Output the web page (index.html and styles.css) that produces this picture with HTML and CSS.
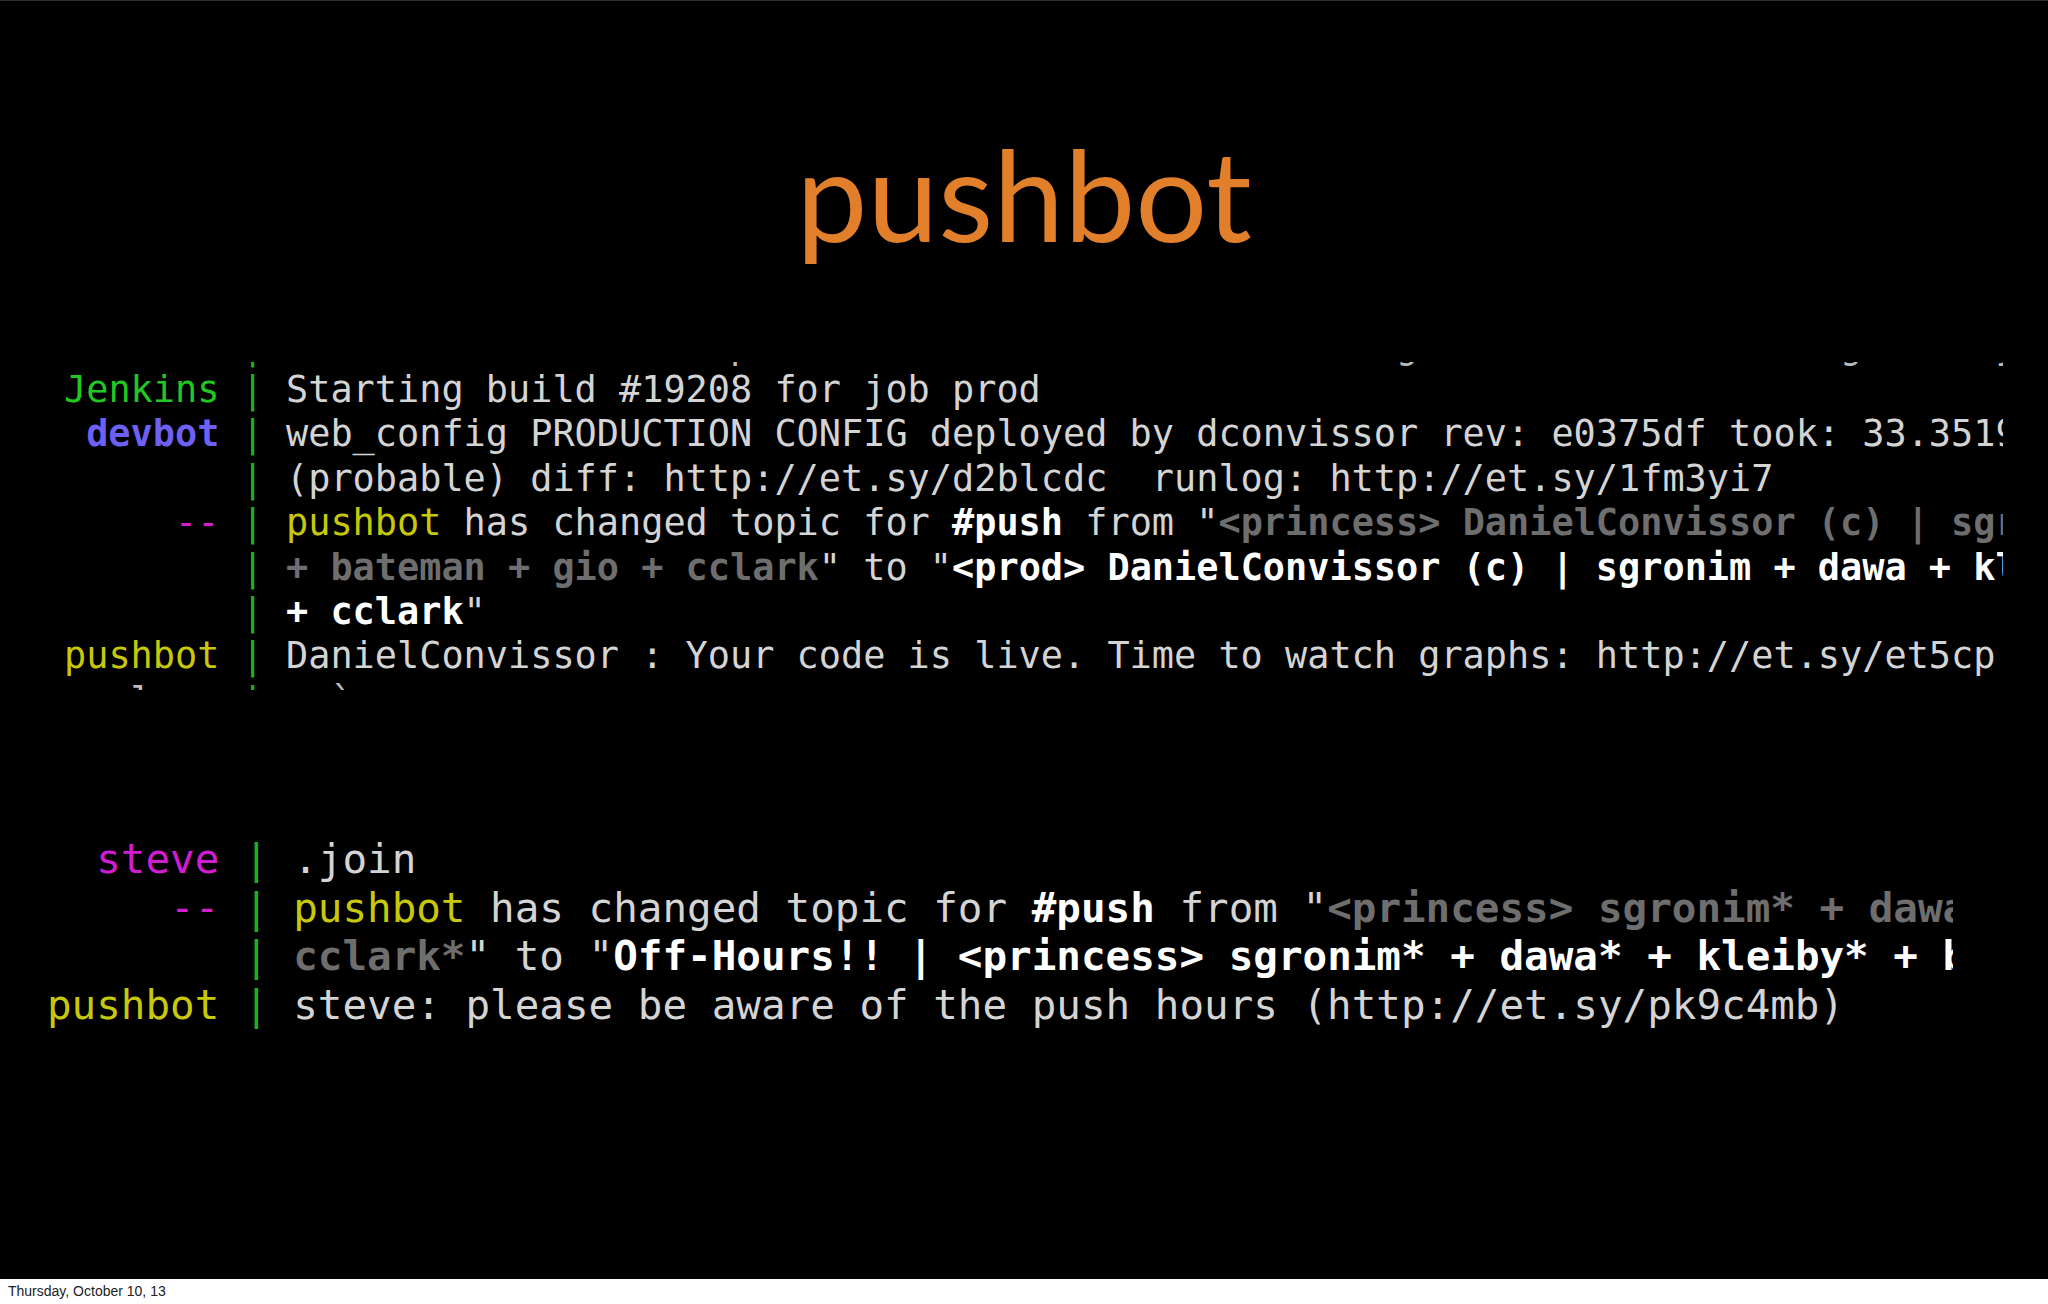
FILE: index.html
```html
<!doctype html>
<html>
    <head>
        <meta charset='utf-8'>
        <title>pushbot</title>
        <link rel="stylesheet" href="styles.css">
    </head>
    <body>
        <div class='slide'>
            <h1 class='title'>pushbot</h1>

            <!-- first irc capture, cropped top and bottom -->
            <div class='term term-a'>
                <div class='rows'>
                    <div class='row ghost'><span class='nick'></span><span class='sep'>|</span><span class='msg'>                    p                             g                   g      y</span></div>
                    <div class='row'><span class='nick c-green'>Jenkins</span><span class='sep'>|</span><span class='msg'>Starting build #19208 for job prod</span></div>
                    <div class='row'><span class='nick c-blue b'>devbot</span><span class='sep'>|</span><span class='msg'>web_config PRODUCTION CONFIG deployed by dconvissor rev: e0375df took: 33.3519s</span></div>
                    <div class='row'><span class='nick'></span><span class='sep'>|</span><span class='msg'>(probable) diff: http://et.sy/d2blcdc  runlog: http://et.sy/1fm3yi7</span></div>
                    <div class='row'><span class='nick c-pink'>--</span><span class='sep'>|</span><span class='msg'><span class='c-yellow'>pushbot</span> has changed topic for <b class='hi'>#push</b> from "<b class='dim'>&lt;princess&gt; DanielConvissor (c) | sgronim + dawa + kleiby</b></span></div>
                    <div class='row'><span class='nick'></span><span class='sep'>|</span><span class='msg'><b class='dim'>+ bateman + gio + cclark</b>" to "<b class='hi'>&lt;prod&gt; DanielConvissor (c) | sgronim + dawa + kleiby</b></span></div>
                    <div class='row'><span class='nick'></span><span class='sep'>|</span><span class='msg'><b class='hi'>+ cclark</b>"</span></div>
                    <div class='row'><span class='nick c-yellow'>pushbot</span><span class='sep'>|</span><span class='msg'>DanielConvissor : Your code is live. Time to watch graphs: http://et.sy/et5cp</span></div>
                    <div class='row ghost'><span class='nick'>   l   </span><span class='sep'>|</span><span class='msg'>  `</span></div>
                </div>
            </div>

            <!-- second irc capture -->
            <div class='term term-b'>
                <div class='row'><span class='nick c-magenta'>steve</span><span class='sep'>|</span><span class='msg'>.join</span></div>
                <div class='row'><span class='nick c-pink'>--</span><span class='sep'>|</span><span class='msg'><span class='c-yellow'>pushbot</span> has changed topic for <b class='hi'>#push</b> from "<b class='dim'>&lt;princess&gt; sgronim* + dawa* + kleiby*</b></span></div>
                <div class='row'><span class='nick'></span><span class='sep'>|</span><span class='msg'><b class='dim'>cclark*</b>" to "<b class='hi'>Off-Hours!! | &lt;princess&gt; sgronim* + dawa* + kleiby* + bateman*</b></span></div>
                <div class='row'><span class='nick c-yellow'>pushbot</span><span class='sep'>|</span><span class='msg'>steve: please be aware of the push hours (http://et.sy/pk9c4mb)</span></div>
            </div>
        </div>
        <div class='footer'>Thursday, October 10, 13</div>
    </body>
</html>
```

FILE: styles.css
```css
html,body,h1 {
    padding:0;
    margin:0;
}
body {
    width:2048px;
    height:1304px;
    overflow:hidden;
    background:#fff;
}
.slide {
    height:1279px;
    box-sizing:border-box;
    padding-top:129px;
    background:#000;
    border-top:1px solid #2e2e2e;
}
.title {
    height:127px;
    font-family:'Lato','Open Sans',sans-serif;
    font-size:127px;
    line-height:127px;
    font-weight:normal;
    text-align:center;
    color:#e17f2b;
}

/* terminal captures */
.term {
    font-family:'DejaVu Sans Mono',monospace;
    overflow:hidden;
    color:#d4d4d4;
}
.term-a {
    width:1939px;
    height:328px;
    margin:105px 0 0 64px;
    font-size:36.88px;
    line-height:44.4px;
}
.term-a .rows {
    margin-top:-38.4px;
}
.term-b {
    width:1906px;
    margin:145px 0 0 47px;
    font-size:40.9px;
    line-height:48.5px;
}
.row {
    display:flex;
    height:1lh;
}
.nick,.sep,.msg {
    flex:none;
    white-space:pre;
}
.nick {
    width:7ch;
    text-align:right;
}
.sep {
    width:3ch;
    text-align:center;
    color:#18b418;
}
.b {
    font-weight:bold;
}
.hi {
    color:#fff;
}
.dim {
    color:#6e6e6e;
}
.ghost .nick,.ghost .msg {
    color:#bcbcbc;
}
.c-green {
    color:#22c722;
}
.c-blue {
    color:#6d60f2;
}
.c-pink {
    color:#cf1fcf;
}
.c-magenta {
    color:#d21cd2;
}
.c-yellow {
    color:#c8c80a;
}

.footer {
    height:25px;
    padding-left:8px;
    font-family:'Liberation Sans',Arial,sans-serif;
    font-size:14px;
    line-height:24px;
    color:#222;
}
```
